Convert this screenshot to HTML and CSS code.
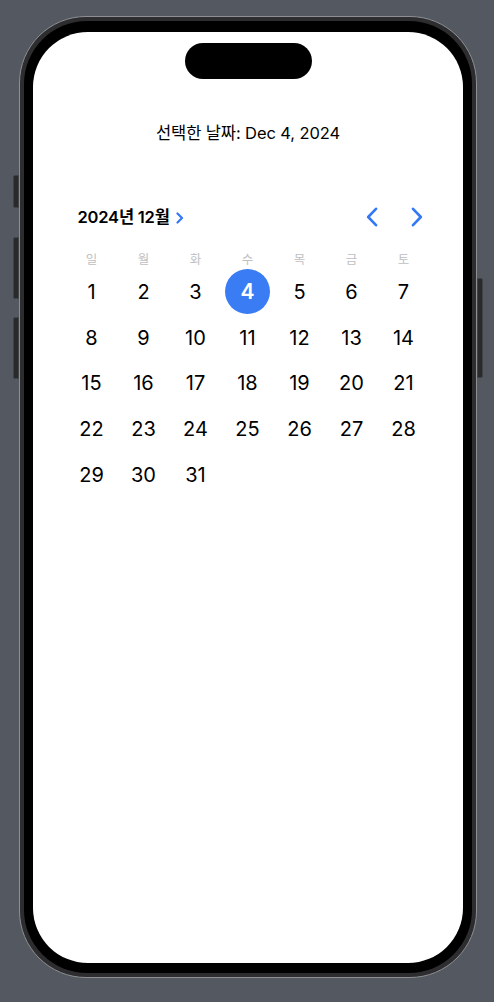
FILE: index.html
```html
<!DOCTYPE html>
<html lang="ko">
<head>
<meta charset="utf-8">
<title>Calendar</title>
<link rel="stylesheet" href="styles.css">
</head>
<body>
<div class="device">
  <span class="btn btn-action"></span>
  <span class="btn btn-vol-up"></span>
  <span class="btn btn-vol-down"></span>
  <span class="btn btn-power"></span>
  <div class="bezel">
    <div class="screen">
      <div class="island"></div>
      <p class="selected-label">선택한 날짜: Dec 4, 2024</p>
      <section class="calendar">
        <header class="cal-header">
          <div class="cal-title">
            <span>2024년 12월</span>
            <svg class="title-chevron" viewBox="0 0 8 12" width="8" height="12"><path d="M1.5 1.5 L6 6 L1.5 10.5" fill="none" stroke="#3478F6" stroke-width="2.2" stroke-linecap="round" stroke-linejoin="round"/></svg>
          </div>
          <div class="cal-nav">
            <svg viewBox="0 0 12 20" width="12" height="20"><path d="M10 1.8 L2.2 10 L10 18.2" fill="none" stroke="#3478F6" stroke-width="2.6" stroke-linecap="round" stroke-linejoin="round"/></svg>
            <svg viewBox="0 0 12 20" width="12" height="20"><path d="M2 1.8 L9.8 10 L2 18.2" fill="none" stroke="#3478F6" stroke-width="2.6" stroke-linecap="round" stroke-linejoin="round"/></svg>
          </div>
        </header>
        <div class="weekdays">
          <span>일</span><span>월</span><span>화</span><span>수</span><span>목</span><span>금</span><span>토</span>
        </div>
        <div class="days">
          <span class="day">1</span><span class="day">2</span><span class="day">3</span><span class="day selected"><b>4</b></span><span class="day">5</span><span class="day">6</span><span class="day">7</span>
          <span class="day">8</span><span class="day">9</span><span class="day">10</span><span class="day">11</span><span class="day">12</span><span class="day">13</span><span class="day">14</span>
          <span class="day">15</span><span class="day">16</span><span class="day">17</span><span class="day">18</span><span class="day">19</span><span class="day">20</span><span class="day">21</span>
          <span class="day">22</span><span class="day">23</span><span class="day">24</span><span class="day">25</span><span class="day">26</span><span class="day">27</span><span class="day">28</span>
          <span class="day">29</span><span class="day">30</span><span class="day">31</span>
        </div>
      </section>
    </div>
  </div>
</div>
</body>
</html>
```

FILE: styles.css
```css
* { box-sizing: border-box; }

html, body {
  margin: 0;
  padding: 0;
  background: #545961;
}

body {
  width: 494px;
  height: 1002px;
  padding: 16px 0 0 19px;
  overflow: hidden;
  font-family: Inter, "Noto Sans CJK KR", "Noto Sans", sans-serif;
}

.device {
  position: relative;
  width: 458px;
  height: 962px;
  border-radius: 67px;
  border: 1px solid #8d8f93;
  background: #2d2d2f;
  padding: 4px;
}

.btn {
  position: absolute;
  width: 6px;
  background: #2a2a2b;
  border: 1px solid #3f4247;
}
.btn-action { left: -7px; top: 158px; height: 33px; border-radius: 2px 0 0 2px; }
.btn-vol-up { left: -7px; top: 220px; height: 62px; border-radius: 2px 0 0 2px; }
.btn-vol-down { left: -7px; top: 300px; height: 62px; border-radius: 2px 0 0 2px; }
.btn-power { right: -7px; top: 261px; height: 100px; border-radius: 0 2px 2px 0; }

.bezel {
  width: 100%;
  height: 100%;
  background: #000;
  border-radius: 63px;
  padding: 11px 9px 9px 9px;
}

.screen {
  width: 430px;
  height: 931px;
  background: #fff;
  border-radius: 55px;
  overflow: hidden;
  display: flex;
  flex-direction: column;
  align-items: center;
}

.island {
  width: 127px;
  height: 36px;
  margin-top: 11px;
  border-radius: 18px;
  background: #000;
  flex: none;
}

.selected-label {
  margin: 43px 0 0 0;
  font-size: 16.5px;
  line-height: 22px;
  color: #000;
  letter-spacing: -0.1px;
}

.calendar {
  width: 364px;
  margin-top: 62px;
  margin-left: -1px;
}

.cal-header {
  height: 22px;
  display: flex;
  align-items: center;
  justify-content: space-between;
  padding: 0 7px 0 12px;
}

.cal-title {
  display: flex;
  align-items: center;
  gap: 6px;
  font-size: 16.5px;
  font-weight: 600;
  line-height: 22px;
  color: #000;
  letter-spacing: -0.2px;
}

.title-chevron { margin-top: 1px; }

.cal-nav {
  display: flex;
  align-items: center;
  gap: 33px;
}

.weekdays {
  margin-top: 23px;
  height: 18px;
  display: grid;
  grid-template-columns: repeat(7, 52px);
  font-size: 12.5px;
  line-height: 18px;
  color: #bfbfc3;
  text-align: center;
}

.days {
  display: grid;
  grid-template-columns: repeat(7, 52px);
  grid-auto-rows: 45.75px;
}

.day {
  display: flex;
  align-items: center;
  justify-content: center;
  font-size: 20px;
  color: #000;
}

.day.selected b {
  width: 45px;
  height: 45px;
  border-radius: 50%;
  background: #3a7cf3;
  color: #fff;
  font-weight: 600;
  display: flex;
  align-items: center;
  justify-content: center;
  font-size: 21px;
}
```
